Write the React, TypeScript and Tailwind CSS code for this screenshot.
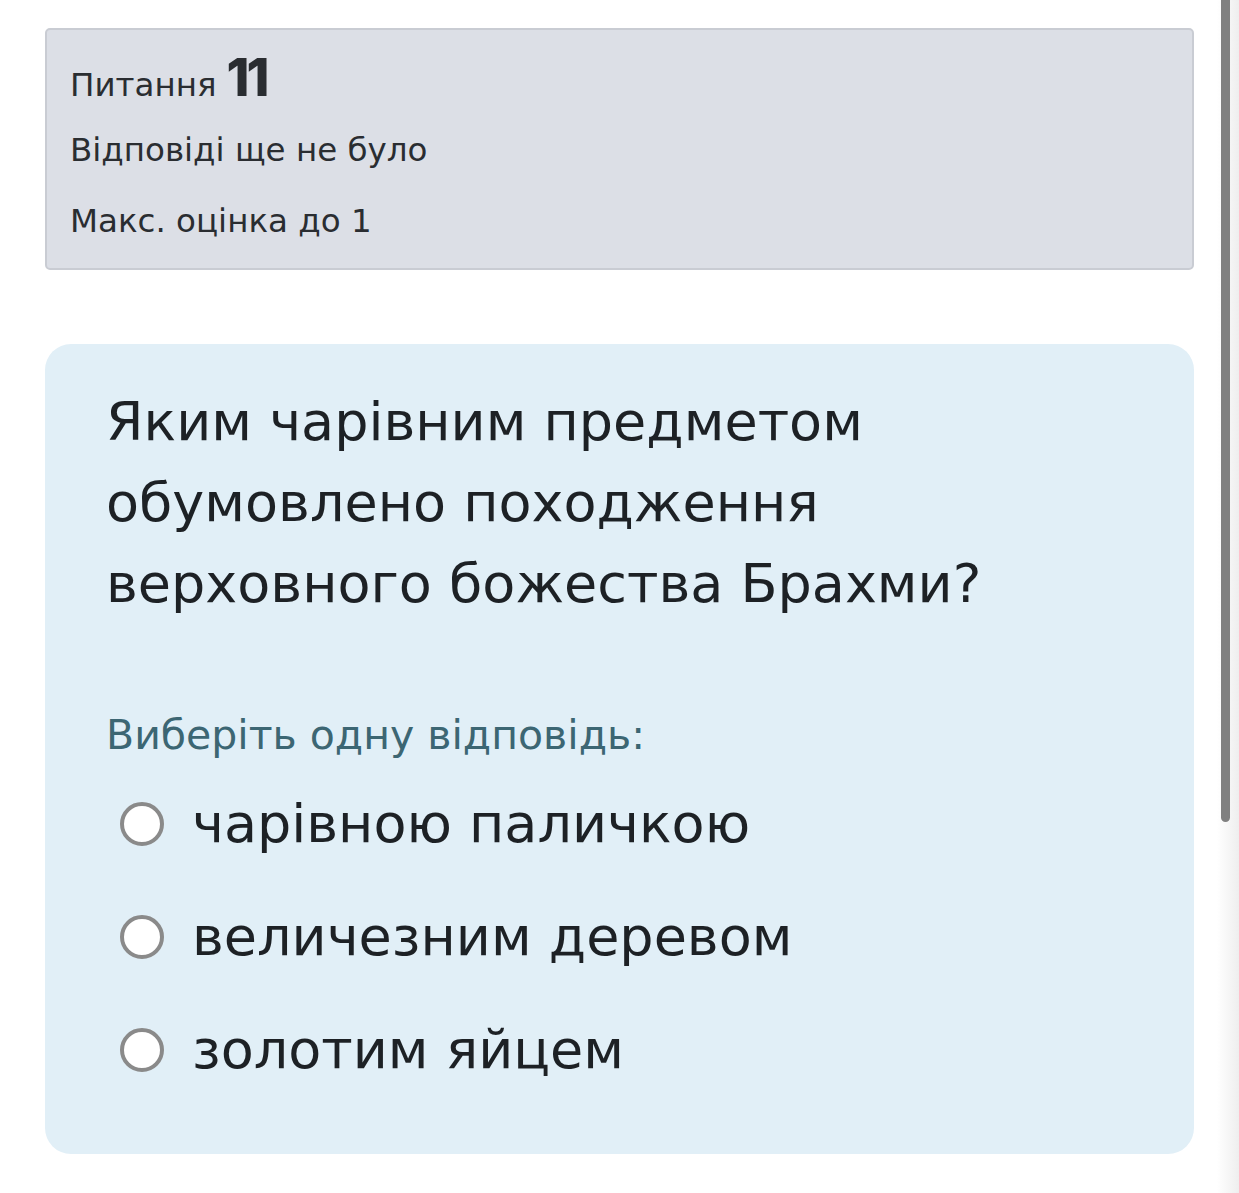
import React from "react";

const font = { fontFamily: '"DejaVu Sans", sans-serif' };

function Radio() {
  return <span className="inline-block w-[44px] h-[44px] rounded-full border-[4px] border-[#8a8a8a] bg-white shrink-0" />;
}

export default function App() {
  const options = ["чарівною паличкою", "величезним деревом", "золотим яйцем"];
  return (
    <div className="relative w-[1239px] h-[1193px] bg-white overflow-hidden" style={font}>
      <div className="pl-[45px] pt-[28px] w-[1194px]">
        <div className="border-2 border-[#c9ccd3] bg-[#dcdfe6] rounded-[5px] pl-[23px] pt-[9px] pb-[12px] text-[#2a2d31]">
          <div className="flex items-baseline h-[56px]">
            <span className="text-[32.5px]">Питання</span>
            <span className="text-[52px] font-extrabold ml-[10px] tracking-[-3px] font-['Inter',sans-serif]">11</span>
          </div>
          <div className="text-[32.5px] leading-[72px] mt-[19px]">Відповіді ще не було</div>
          <div className="text-[32.5px] leading-[70px]">Макс. оцінка до 1</div>
        </div>
        <div className="mt-[74px] bg-[#e1eff7] rounded-[26px] pl-[61px] pr-[40px] pt-[37px] pb-[48px]">
          <div className="text-[54px] leading-[81px] text-[#1d2125] w-[950px]">
            Яким чарівним предметом обумовлено походження верховного божества Брахми?
          </div>
          <div className="mt-[86px] text-[41px] leading-[50px] text-[#3c6673]">Виберіть одну відповідь:</div>
          <div className="mt-[7px] flex flex-col">
            {options.map((o) => (
              <div key={o} className="flex items-center h-[113px] pl-[14px]">
                <Radio />
                <span className="ml-[28px] text-[54px] text-[#1d2125]">{o}</span>
              </div>
            ))}
          </div>
        </div>
      </div>
      <div className="absolute top-0 right-0 w-[22px] h-full bg-gradient-to-r from-white to-[#eeeeee]" />
      <div className="absolute top-0 left-[1221px] w-[9px] h-[822px] bg-[#808080] rounded-b-[5px]" />
    </div>
  );
}
